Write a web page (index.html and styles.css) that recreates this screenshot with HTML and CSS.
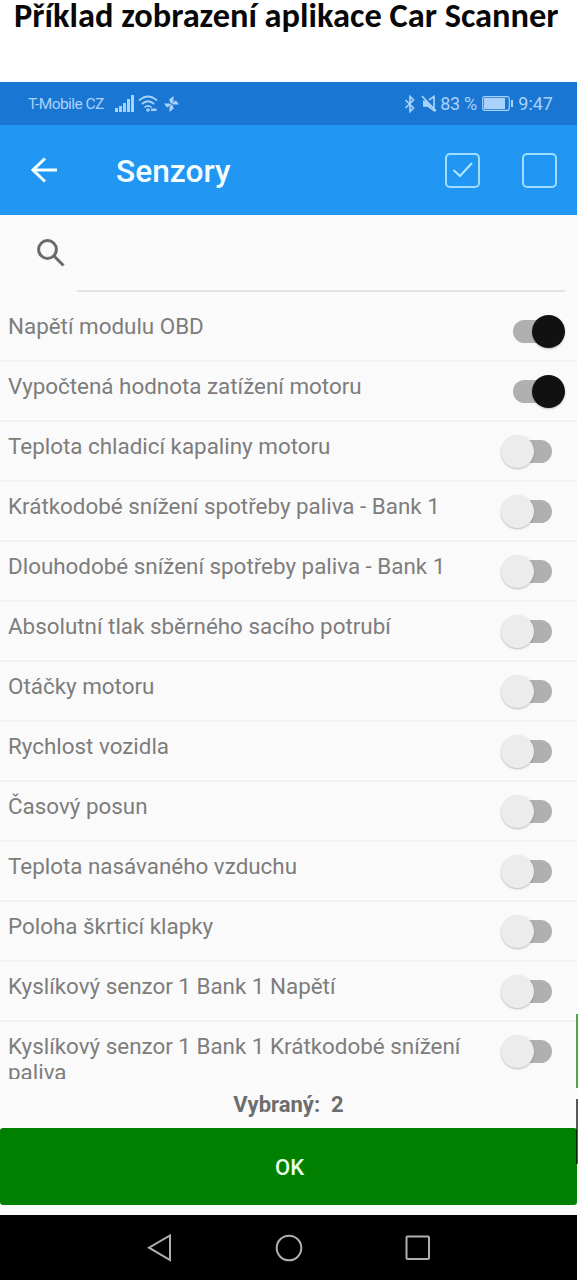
FILE: index.html
```html
<!DOCTYPE html>
<html lang="cs">
<head>
<meta charset="utf-8">
<title>Car Scanner – Senzory</title>
<link rel="stylesheet" href="styles.css">
</head>
<body>
<div class="page">
  <h1 class="caption">Příklad zobrazení aplikace Car Scanner</h1>
  <div class="phone">
    <div class="status">
      <span class="carrier">T-Mobile CZ</span>
      <svg class="signal" width="19" height="17" viewBox="0 0 19 17"><path d="M0 13h3v4H0zM4 11h3v6H4zM8 8h3v9H8zM12 4h3v13h-3zM16 0h3v17h-3z"/></svg>
      <svg class="wifi" width="20" height="17" viewBox="0 0 20 17"><g class="line"><path d="M1 5.500Q10-2.500 19 5.500M3.800 9Q10 3.500 16.200 9M6.500 12.300Q10 9.400 13.500 12.300"/></g><circle cx="10" cy="15" r="1.800"/><path d="M13 13.500h5.500v2.500H13z"/></svg>
      <svg class="fan" width="15" height="16" viewBox="0 0 15 16"><path d="M6.800 8L5.200 3.500 9.500 0v5zM7.500 7.300l4.500-2.800 3 4h-5zM8.200 8l1.600 4.500L5.500 16v-5zM7.500 8.700L3 11.500l-3-4h5z"/></svg>
      <span class="grow"></span>
      <svg class="bt" width="12" height="18" viewBox="0 0 12 18"><path class="line" d="M1.500 5l8 8L6 16.500v-15L9.500 5l-8 8"/></svg>
      <svg class="mute" width="16" height="17" viewBox="0 0 16 17"><g class="line"><path d="M1 1l14 15"/><path d="M3 6v5h4l6 4.500V1.500L8 5"/></g><path d="M2 5.500h3l5 5.500v2.500L6.500 11H2z"/></svg>
      <span class="pct">83 %</span>
      <svg class="battery" width="31" height="15" viewBox="0 0 31 15"><rect x=".7" y=".7" width="26.600" height="13.600" rx="2" class="line thin"/><path d="M2 2h21v11H2zM29 4h2v7h-2z"/></svg>
      <span class="time">9:47</span>
    </div>
    <div class="bar">
      <svg class="back" width="27" height="26" viewBox="0 0 27 26"><path d="M26 13H2M14 1.500L2 13l12 11.500"/></svg>
      <span class="heading">Senzory</span>
      <span class="grow"></span>
      <span class="box"><svg width="22" height="18" viewBox="0 0 22 18"><path d="M1.500 9l6.500 6L20 2"/></svg></span>
      <span class="box"></span>
    </div>
    <div class="search">
      <svg width="28" height="28" viewBox="0 0 28 28"><circle cx="10.500" cy="10.500" r="8.900"/><path d="M17 17l9.500 9.500"/></svg>
      <span class="field"></span>
    </div>
    <ul class="list">
      <li><span class="name">Napětí modulu OBD</span><i class="switch on"></i></li>
      <li><span class="name">Vypočtená hodnota zatížení motoru</span><i class="switch on"></i></li>
      <li><span class="name">Teplota chladicí kapaliny motoru</span><i class="switch"></i></li>
      <li><span class="name">Krátkodobé snížení spotřeby paliva - Bank 1</span><i class="switch"></i></li>
      <li><span class="name">Dlouhodobé snížení spotřeby paliva - Bank 1</span><i class="switch"></i></li>
      <li><span class="name">Absolutní tlak sběrného sacího potrubí</span><i class="switch"></i></li>
      <li><span class="name">Otáčky motoru</span><i class="switch"></i></li>
      <li><span class="name">Rychlost vozidla</span><i class="switch"></i></li>
      <li><span class="name">Časový posun</span><i class="switch"></i></li>
      <li><span class="name">Teplota nasávaného vzduchu</span><i class="switch"></i></li>
      <li><span class="name">Poloha škrticí klapky</span><i class="switch"></i></li>
      <li><span class="name">Kyslíkový senzor 1 Bank 1 Napětí</span><i class="switch"></i></li>
      <li><span class="name">Kyslíkový senzor 1 Bank 1 Krátkodobé snížení paliva</span><i class="switch"></i></li>
    </ul>
    <div class="selected">Vybraný:&nbsp; 2</div>
    <div class="ok">OK</div>
    <div class="nav">
      <svg width="26" height="28" viewBox="0 0 26 28"><path d="M23 1.500v24.500L2 13.700z"/></svg>
      <svg width="28" height="28" viewBox="0 0 28 28"><circle cx="14" cy="14" r="12.300"/></svg>
      <svg width="26" height="26" viewBox="0 0 26 26"><rect x="1.500" y="1.500" width="22.500" height="22.500" rx="1"/></svg>
    </div>
  </div>
  <span class="edge green"></span>
  <span class="edge dark"></span>
</div>
</body>
</html>
```
FILE: styles.css
```css
* { box-sizing: border-box; }
body { margin: 0; background: #fff; font-family: Roboto, "Liberation Sans", sans-serif; }
.page { position: relative; width: 578px; height: 1280px; overflow: hidden; }
svg { display: block; flex: none; }
.grow { flex: 1; }
.caption { margin: 0; height: 82px; padding-left: 14px; font: bold 34.4px/30px Carlito, Lato, sans-serif; color: #080808; white-space: nowrap; }
.phone { width: 577px; background: #fafafa; }

.status { display: flex; align-items: center; height: 43px; padding: 0 24px 0 28px; background: #1976d2; color: #a9d2fa; fill: #a9d2fa; font-size: 18px; white-space: nowrap; }
.status .line { fill: none; stroke: #a9d2fa; stroke-width: 1.7; }
.status .thin { stroke-width: 1.2; }
.carrier { width: 87px; padding-top: 1px; font-size: 15.5px; letter-spacing: -.55px; }
.wifi { margin-left: 4px; }
.fan { margin-left: 6px; }
.mute { margin-left: 5px; }
.pct { width: 42px; margin-left: 3px; letter-spacing: -.3px; }
.battery { margin-right: 5px; }

.bar { display: flex; align-items: center; height: 90px; padding: 0 20px 0 31px; background: #2196f3; color: #f4fdff; }
.back { fill: none; stroke: #f4fdff; stroke-width: 3; }
.heading { margin-left: 58px; padding-top: 2px; font-size: 31.7px; font-weight: 500; }
.box { display: flex; align-items: center; justify-content: center; width: 35px; height: 35px; border: 2px solid #a0ddff; border-radius: 5px; }
.box + .box { margin-left: 42px; }
.box svg { fill: none; stroke: #b4e6ff; stroke-width: 2; }

.search { display: flex; height: 87px; padding: 24px 12px 10px 37px; }
.search svg { fill: none; stroke: #6b6b6b; stroke-width: 3; }
.field { flex: 1; margin-left: 12px; border-bottom: 2px solid #e3e3e3; }

.list { height: 777px; margin: 0; padding: 0; list-style: none; overflow: hidden; }
.list li { display: flex; justify-content: space-between; height: 60px; padding: 11px 12px 0 8px; }
.list li:not(:last-child) { border-bottom: 2px solid #f1f1f1; }
.list li:last-child { height: 90px; }
.name { width: 470px; color: #7d7d7d; font-size: 22.4px; line-height: 26px; }
.switch { position: relative; flex: none; width: 39px; height: 23px; margin: 7px 13px 0 0; border-radius: 12px; background: #b0b0b0; }
.switch::after { content: ""; position: absolute; left: -12px; top: -5px; width: 33px; height: 33px; border-radius: 50%; background: #ececec; box-shadow: 0 1px 2px rgba(0,0,0,.25); }
.switch.on::after { left: 19px; background: #111; }

.selected { height: 49px; padding-top: 13px; text-align: center; color: #6d6d6d; font-size: 22px; font-weight: 700; line-height: 26px; }
.ok { display: flex; align-items: center; justify-content: center; height: 77px; padding: 2px 0 0 2px; border-radius: 3px; background: #008000; color: #e8ffe8; font-size: 22px; font-weight: 500; }
.nav { display: flex; align-items: center; justify-content: center; gap: 102px; height: 65px; margin-top: 10px; background: #000; }
.nav svg { fill: none; stroke: #b0b0b0; stroke-width: 2; }

.edge { position: absolute; right: 0; width: 2px; }
.edge.green { top: 1014px; height: 74px; background: #4ea653; }
.edge.dark { top: 1099px; height: 65px; background: rgba(0,0,0,.65); }
```
